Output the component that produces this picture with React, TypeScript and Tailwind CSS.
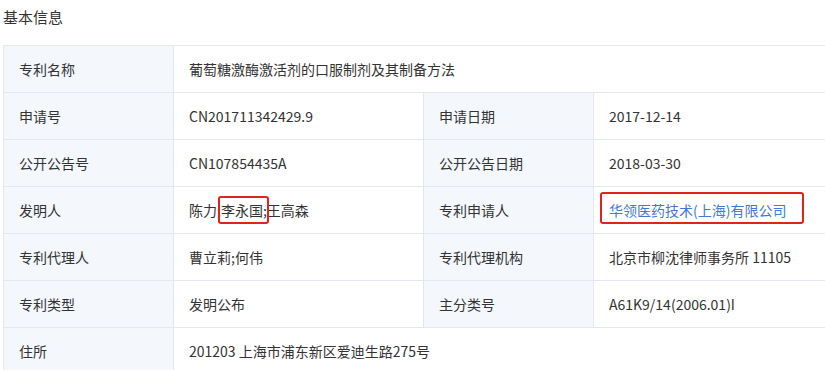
const rows = [
  { label: "申请号", value: "CN201711342429.9", label2: "申请日期", value2: "2017-12-14" },
  { label: "公开公告号", value: "CN107854435A", label2: "公开公告日期", value2: "2018-03-30" },
];

const rows2 = [
  { label: "专利代理人", value: "曹立莉;何伟", label2: "专利代理机构", value2: "北京市柳沈律师事务所 11105" },
  { label: "专利类型", value: "发明公布", label2: "主分类号", value2: "A61K9/14(2006.01)I" },
];

const labelCls = "bg-[#f4f7fc] border border-[#e3e8f0] pl-[15px] text-[#333] h-[47px] align-middle";
const valueCls = "border border-[#e3e8f0] pl-[15px] text-[#333] h-[47px] align-middle";

export default function App() {
  return (
    <div
      className="w-[825px] h-[370px] overflow-hidden bg-white text-[14px]"
      style={{ fontFamily: '"Microsoft YaHei", "Noto Sans CJK SC", "Noto Sans", sans-serif' }}
    >
      <h2 className="h-[45px] pl-[3px] pt-[7px] text-[15px] text-[#333] leading-[20px]">基本信息</h2>
      <table className="ml-[3px] w-[860px] border-collapse table-fixed">
        <colgroup>
          <col className="w-[170px]" />
          <col className="w-[250px]" />
          <col className="w-[170px]" />
          <col />
        </colgroup>
        <tbody>
          <tr>
            <td className={labelCls}>专利名称</td>
            <td className={valueCls} colSpan={3}>葡萄糖激酶激活剂的口服制剂及其制备方法</td>
          </tr>
          {rows.map((r) => (
            <tr key={r.label}>
              <td className={labelCls}>{r.label}</td>
              <td className={valueCls}>{r.value}</td>
              <td className={labelCls}>{r.label2}</td>
              <td className={valueCls}>{r.value2}</td>
            </tr>
          ))}
          <tr>
            <td className={labelCls}>发明人</td>
            <td className={valueCls + " relative"}>
              陈力;李永国;王高森
              <span className="absolute left-[44px] top-[9px] w-[51px] h-[28px] border-2 border-[#e2231a] rounded-[3px]" />
            </td>
            <td className={labelCls}>专利申请人</td>
            <td className={valueCls + " relative"}>
              <a className="text-[#4279d6]">华领医药技术(上海)有限公司</a>
              <span className="absolute left-[6px] top-[5px] w-[204px] h-[32px] border-2 border-[#e2231a] rounded-[3px]" />
            </td>
          </tr>
          {rows2.map((r) => (
            <tr key={r.label}>
              <td className={labelCls}>{r.label}</td>
              <td className={valueCls}>{r.value}</td>
              <td className={labelCls}>{r.label2}</td>
              <td className={valueCls}>{r.value2}</td>
            </tr>
          ))}
          <tr>
            <td className={labelCls}>住所</td>
            <td className={valueCls} colSpan={3}>201203 上海市浦东新区爱迪生路275号</td>
          </tr>
        </tbody>
      </table>
    </div>
  );
}
